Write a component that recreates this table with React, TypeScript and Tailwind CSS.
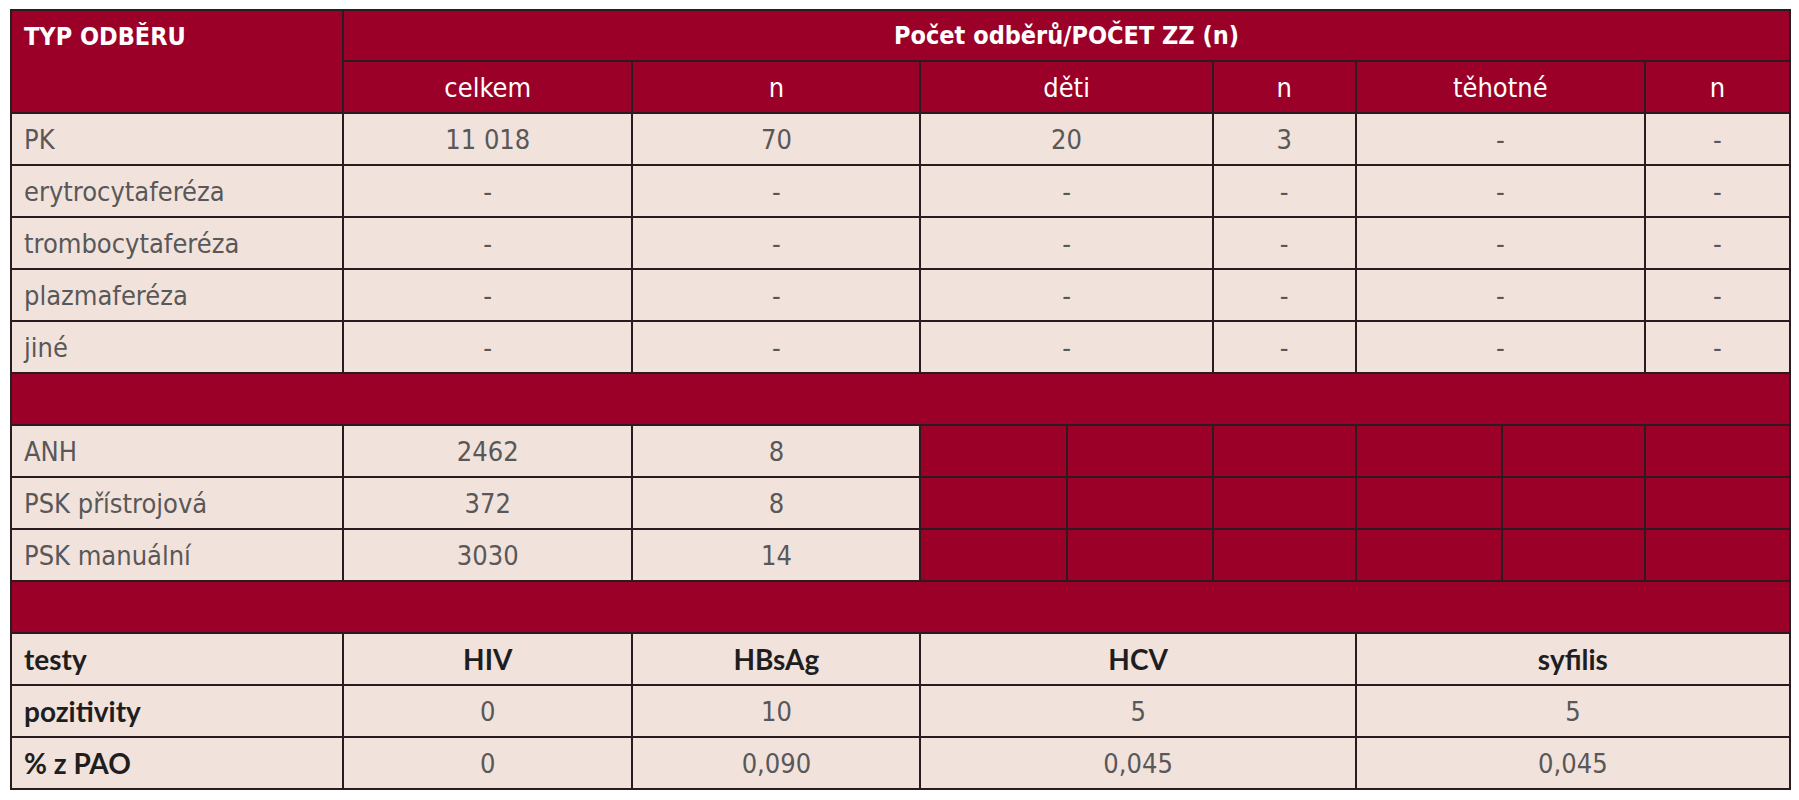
const RED = 'bg-[#9b0029]'
const PINK = 'bg-[#f2e2dc]'

const cell = 'border-2 border-[#2b1a1e] p-0'
const body = `${cell} ${PINK} text-center text-[#585858] text-[27px] leading-none`
const first = `${cell} ${PINK} text-left pl-[12px] text-[#585858] text-[27px] leading-none`
const bold = `${cell} ${PINK} text-[#1e1e1e] text-[28px] font-bold leading-none [font-family:Lato,'Liberation_Sans',sans-serif]`

const upper: [string, string[]][] = [
  ['PK', ['11 018', '70', '20', '3', '-', '-']],
  ['erytrocytaferéza', ['-', '-', '-', '-', '-', '-']],
  ['trombocytaferéza', ['-', '-', '-', '-', '-', '-']],
  ['plazmaferéza', ['-', '-', '-', '-', '-', '-']],
  ['jiné', ['-', '-', '-', '-', '-', '-']],
]

const autologous: [string, string, string][] = [
  ['ANH', '2462', '8'],
  ['PSK přístrojová', '372', '8'],
  ['PSK manuální', '3030', '14'],
]

const tests: [string, string[]][] = [
  ['testy', ['HIV', 'HBsAg', 'HCV', 'syfilis']],
  ['pozitivity', ['0', '10', '5', '5']],
  ['% z PAO', ['0', '0,090', '0,045', '0,045']],
]

export default function App() {
  return (
    <div className="min-h-screen bg-white pl-[10px] pt-[9px] [font-family:'Liberation_Sans_Narrow','DejaVu_Sans_Condensed',sans-serif]">
      <table className="table-fixed border-collapse w-[1781px]">
        <colgroup>
          <col className="w-[332px]" />
          <col className="w-[289px]" />
          <col className="w-[288px]" />
          <col className="w-[146px]" />
          <col className="w-[146px]" />
          <col className="w-[143px]" />
          <col className="w-[146px]" />
          <col className="w-[143px]" />
          <col className="w-[145px]" />
        </colgroup>
        <tbody>
          <tr className="h-[51px]">
            <td
              rowSpan={2}
              className={`${cell} ${RED} align-top text-left pl-[12px] pt-[13px] text-white text-[25px] font-bold leading-none`}
            >
              TYP ODBĚRU
            </td>
            <td colSpan={8} className={`${cell} ${RED} text-center text-white text-[25px] font-bold leading-none`}>
              Počet odběrů/POČET ZZ (n)
            </td>
          </tr>
          <tr className="h-[52px]">
            {[
              ['celkem', 1],
              ['n', 1],
              ['děti', 2],
              ['n', 1],
              ['těhotné', 2],
              ['n', 1],
            ].map(([label, span], i) => (
              <td
                key={i}
                colSpan={span as number}
                className={`${cell} ${RED} text-center text-white text-[27px] leading-none`}
              >
                {label}
              </td>
            ))}
          </tr>

          {upper.map(([name, vals]) => (
            <tr key={name} className="h-[52px]">
              <td className={first}>{name}</td>
              <td className={body}>{vals[0]}</td>
              <td className={body}>{vals[1]}</td>
              <td colSpan={2} className={body}>
                {vals[2]}
              </td>
              <td className={body}>{vals[3]}</td>
              <td colSpan={2} className={body}>
                {vals[4]}
              </td>
              <td className={body}>{vals[5]}</td>
            </tr>
          ))}

          <tr className="h-[52px]">
            <td colSpan={9} className={`${cell} ${RED}`} />
          </tr>

          {autologous.map(([name, total, n]) => (
            <tr key={name} className="h-[52px]">
              <td className={first}>{name}</td>
              <td className={body}>{total}</td>
              <td className={body}>{n}</td>
              {[0, 1, 2, 3, 4, 5].map((k) => (
                <td key={k} className={`${cell} ${RED}`} />
              ))}
            </tr>
          ))}

          <tr className="h-[52px]">
            <td colSpan={9} className={`${cell} ${RED}`} />
          </tr>

          {tests.map(([name, vals], r) => (
            <tr key={name} className="h-[52px]">
              <td className={`${bold} text-left pl-[12px]`}>{name}</td>
              <td className={r === 0 ? `${bold} text-center` : body}>{vals[0]}</td>
              <td className={r === 0 ? `${bold} text-center` : body}>{vals[1]}</td>
              <td colSpan={3} className={r === 0 ? `${bold} text-center` : body}>
                {vals[2]}
              </td>
              <td colSpan={3} className={r === 0 ? `${bold} text-center` : body}>
                {vals[3]}
              </td>
            </tr>
          ))}
        </tbody>
      </table>
    </div>
  )
}
